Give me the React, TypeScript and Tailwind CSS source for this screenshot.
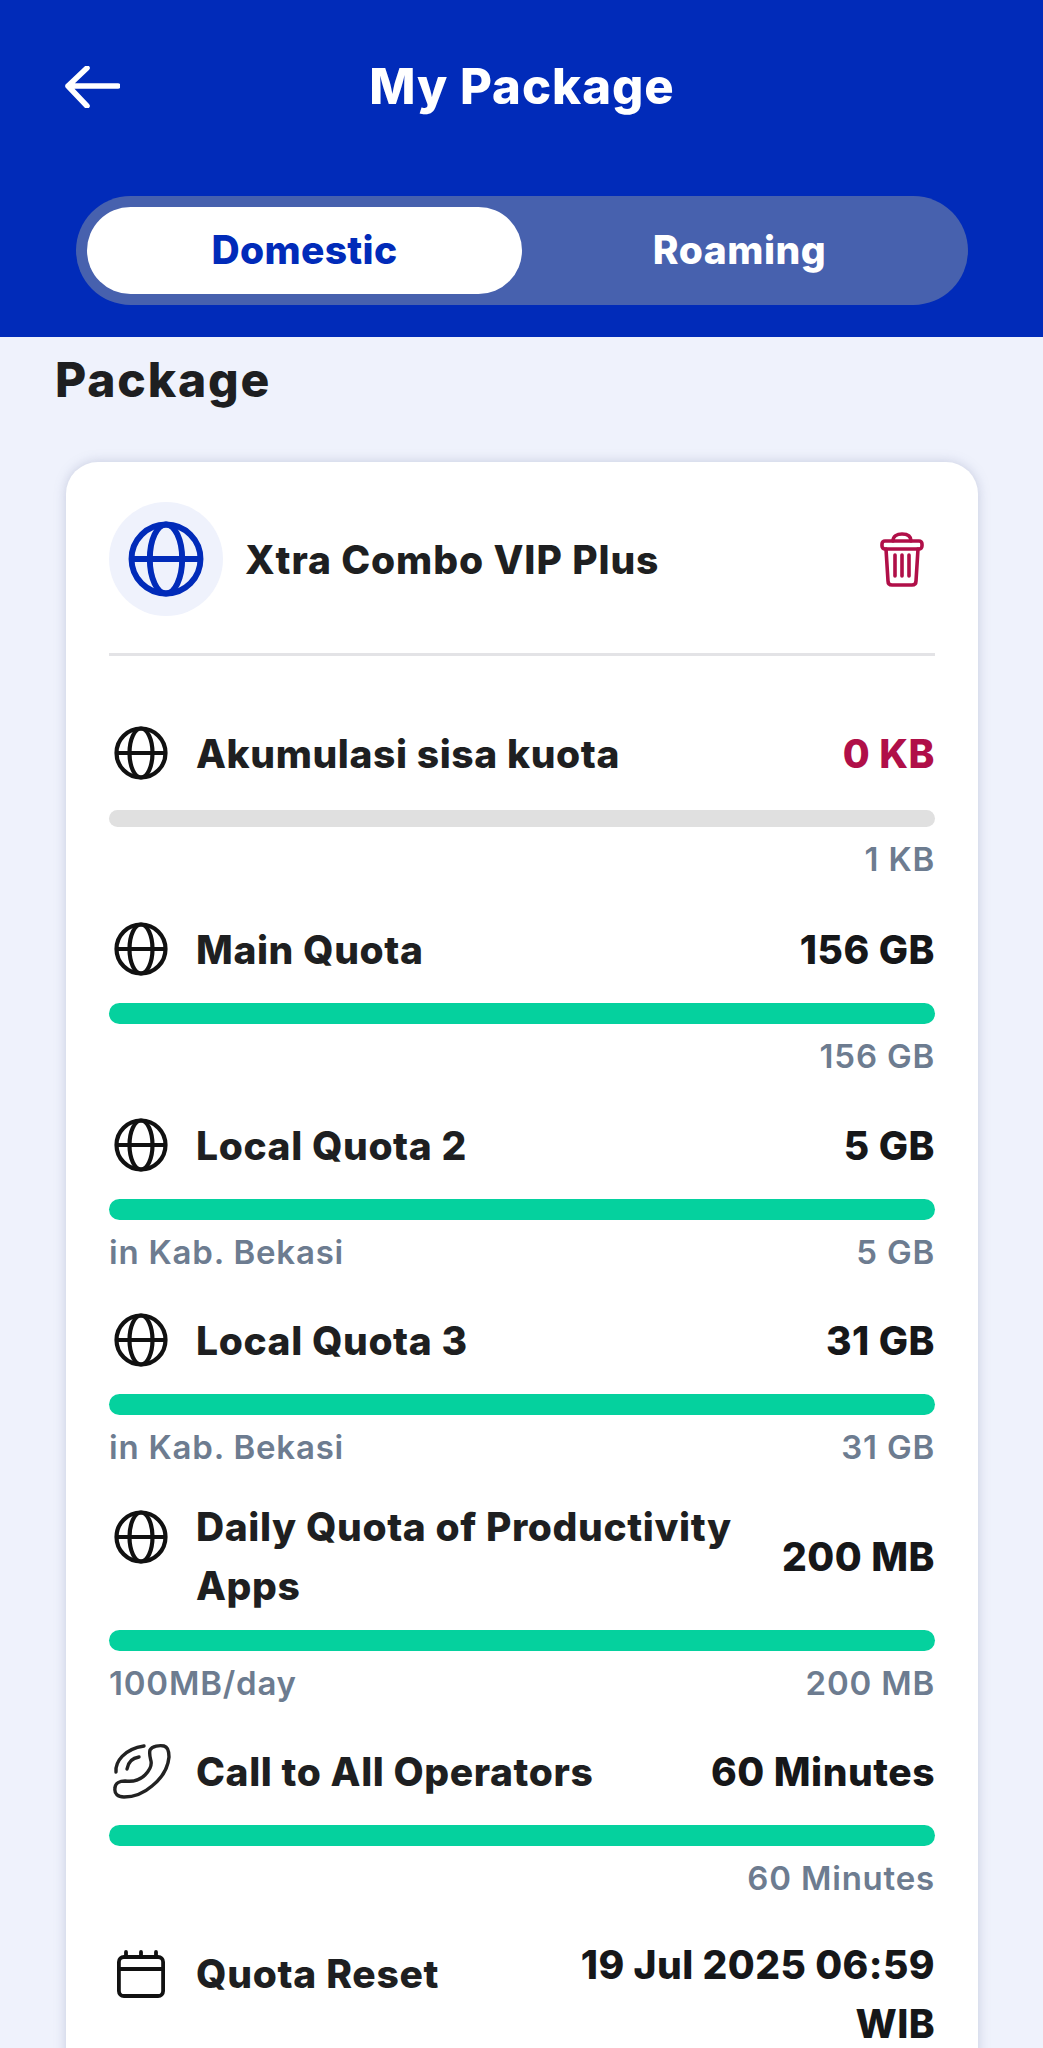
import type { ReactNode } from "react";

function Globe({ className }: { className: string }) {
  return (
    <svg viewBox="0 0 54 54" fill="none" stroke="currentColor" strokeWidth="4.2" className={className}>
      <circle cx="27" cy="27" r="24.5" />
      <ellipse cx="27" cy="27" rx="11.5" ry="24.5" />
      <path d="M2.5 27h49" />
    </svg>
  );
}

function Phone() {
  return (
    <svg viewBox="0 0 54 54" fill="none" stroke="#222" strokeWidth="3.4" strokeLinecap="round" className="w-[54px] h-[54px] overflow-visible">
      <path d="M36 6C38 2 46 1 50 2C54 3 55 8 55 13C54 24 48 34 38 42C30 49 20 53 10 53C4 53 0 50 1 44C1 39 6 37 11 37C18 38 26 36 31 31C36 26 38 22 37 17C36 13 35 10 36 6Z" />
      <path d="M2 28C1 18 10 5 30 2" />
      <path d="M13 25C14 19 18 14 25 13" />
    </svg>
  );
}

function Calendar() {
  return (
    <svg viewBox="0 0 48 48" fill="none" stroke="#111" strokeWidth="3.8" strokeLinecap="round" className="w-[48px] h-[48px]">
      <rect x="1.9" y="7" width="44.2" height="39" rx="5" />
      <path d="M2 19h44M9 2v5M24 2v5M39 2v5" />
    </svg>
  );
}

function Trash() {
  return (
    <svg viewBox="0 0 44 55" fill="none" stroke="#b00f48" strokeWidth="3.6" strokeLinejoin="round" strokeLinecap="round" className="w-[44px] h-[55px]">
      <path d="M13 9C13 4 17 2 22 2C27 2 31 4 31 9" />
      <rect x="2" y="9" width="40" height="8" rx="3" />
      <path d="M6 17L8 49C8 52 10 53 12 53H32C34 53 36 52 36 49L38 17" />
      <path d="M15 23V44M22 23V44M29 23V44" />
    </svg>
  );
}

type RowProps = {
  icon: ReactNode;
  title: ReactNode;
  value: ReactNode;
  left?: string;
  right?: string;
  top?: boolean;
  valueClass?: string;
  empty?: boolean;
  className?: string;
};

function QuotaRow({ icon, title, value, left, right, top, valueClass, empty, className }: RowProps) {
  return (
    <div className={className}>
      <div className={`flex min-h-[78px] ${top ? "items-start" : "items-center"}`}>
        <div className={`w-[65px] shrink-0 pl-[5px] flex ${top ? "pt-[13px]" : ""}`}>{icon}</div>
        <div className="flex-1 pl-[22px] text-[39px] leading-[59px] font-extrabold text-[#1e1f21] tracking-[0.6px]">{title}</div>
        <div className={`self-center text-right text-[39px] leading-[59px] font-extrabold tracking-[0.5px] ${valueClass ?? "text-[#161719]"}`}>{value}</div>
      </div>
      <div className={empty ? "mt-[18px] h-[17px] rounded-full bg-[#e0e0e0]" : "mt-[15px] h-[21px] rounded-full bg-[#05d19e]"} />
      <div className="mt-[17px] flex justify-between text-[33px] leading-[30px] font-semibold tracking-[0.8px] text-[#6d7c90]">
        <span>{left}</span>
        <span>{right}</span>
      </div>
    </div>
  );
}

function ResetRow({ className }: { className: string }) {
  return (
    <div className={`${className} flex items-start`}>
      <div className="w-[65px] h-[78px] shrink-0 pl-[8px] flex items-center"><Calendar /></div>
      <div className="flex-1 pl-[22px] text-[39px] leading-[78px] font-extrabold text-[#1e1f21] tracking-[0.7px]">Quota Reset</div>
      <div className="text-right text-[39px] leading-[59px] font-extrabold tracking-[0.4px] text-[#161719]">
        19 Jul 2025 06:59
        <br />
        WIB
      </div>
    </div>
  );
}

export default function App() {
  const rowGlobe = <Globe className="w-[54px] h-[54px] text-[#111]" />;

  return (
    <div className="h-[2048px] overflow-hidden bg-[#eff2fc] font-['Inter',sans-serif]">
      {/* Header */}
      <div className="h-[337px] bg-[#012bb9]">
        <div className="h-[174px] grid grid-cols-[1fr_auto_1fr] items-center pl-[65px]">
          <svg viewBox="0 0 55 42" fill="none" stroke="white" strokeWidth="5.5" strokeLinecap="round" strokeLinejoin="round" className="w-[55px] h-[42px]">
            <path d="M53 20H3M22 2L3 20L22 40" />
          </svg>
          <div className="text-[49px] font-extrabold text-white tracking-[1px] -translate-x-[32px]">My Package</div>
          <div />
        </div>
        <div className="mt-[22px] ml-[76px] w-[892px] h-[109px] rounded-full bg-[#4761ae] p-[11px] flex">
          <div className="w-[435px] rounded-full bg-white flex items-center justify-center text-[39px] font-extrabold tracking-[0.3px] text-[#012bb9]">Domestic</div>
          <div className="w-[435px] flex items-center justify-center text-[39px] font-extrabold tracking-[0.5px] text-white">Roaming</div>
        </div>
      </div>

      <div className="mt-[13px] ml-[55px] text-[48px] leading-[60px] font-extrabold tracking-[1.8px] text-[#1e1f21]">Package</div>

      {/* Card */}
      <div className="mt-[52px] ml-[66px] w-[912px] rounded-[32px] bg-white pt-[40px] px-[43px] pb-[40px] shadow-[0_0_12px_rgba(120,130,170,0.35)]">
        <div className="flex items-center">
          <div className="w-[114px] h-[114px] rounded-full bg-[#eff2fc] flex items-center justify-center">
            <Globe className="w-[76px] h-[76px] text-[#012bb9]" />
          </div>
          <div className="flex-1 pl-[22px] pt-[3px] text-[39px] font-extrabold text-[#1e1f21] tracking-[0.9px]">Xtra Combo VIP Plus</div>
          <div className="pr-[11px] flex"><Trash /></div>
        </div>
        <div className="mt-[37px] h-[3px] bg-[#e3e3e6]" />

        <QuotaRow className="mt-[58px]" icon={rowGlobe} title="Akumulasi sisa kuota" value="0 KB" valueClass="text-[#b00f48]" right="1 KB" left="" empty />
        <QuotaRow className="mt-[36px]" icon={rowGlobe} title="Main Quota" value="156 GB" left="" right="156 GB" />
        <QuotaRow className="mt-[35px]" icon={rowGlobe} title="Local Quota 2" value="5 GB" left="in Kab. Bekasi" right="5 GB" />
        <QuotaRow className="mt-[34px]" icon={rowGlobe} title="Local Quota 3" value="31 GB" left="in Kab. Bekasi" right="31 GB" />
        <QuotaRow className="mt-[35px]" icon={rowGlobe} title={<>Daily Quota of Productivity<br />Apps</>} value="200 MB" left="100MB/day" right="200 MB" top />
        <QuotaRow className="mt-[34px]" icon={<Phone />} title="Call to All Operators" value="60 Minutes" left="" right="60 Minutes" />
        <ResetRow className="mt-[42px]" />
      </div>
    </div>
  );
}
